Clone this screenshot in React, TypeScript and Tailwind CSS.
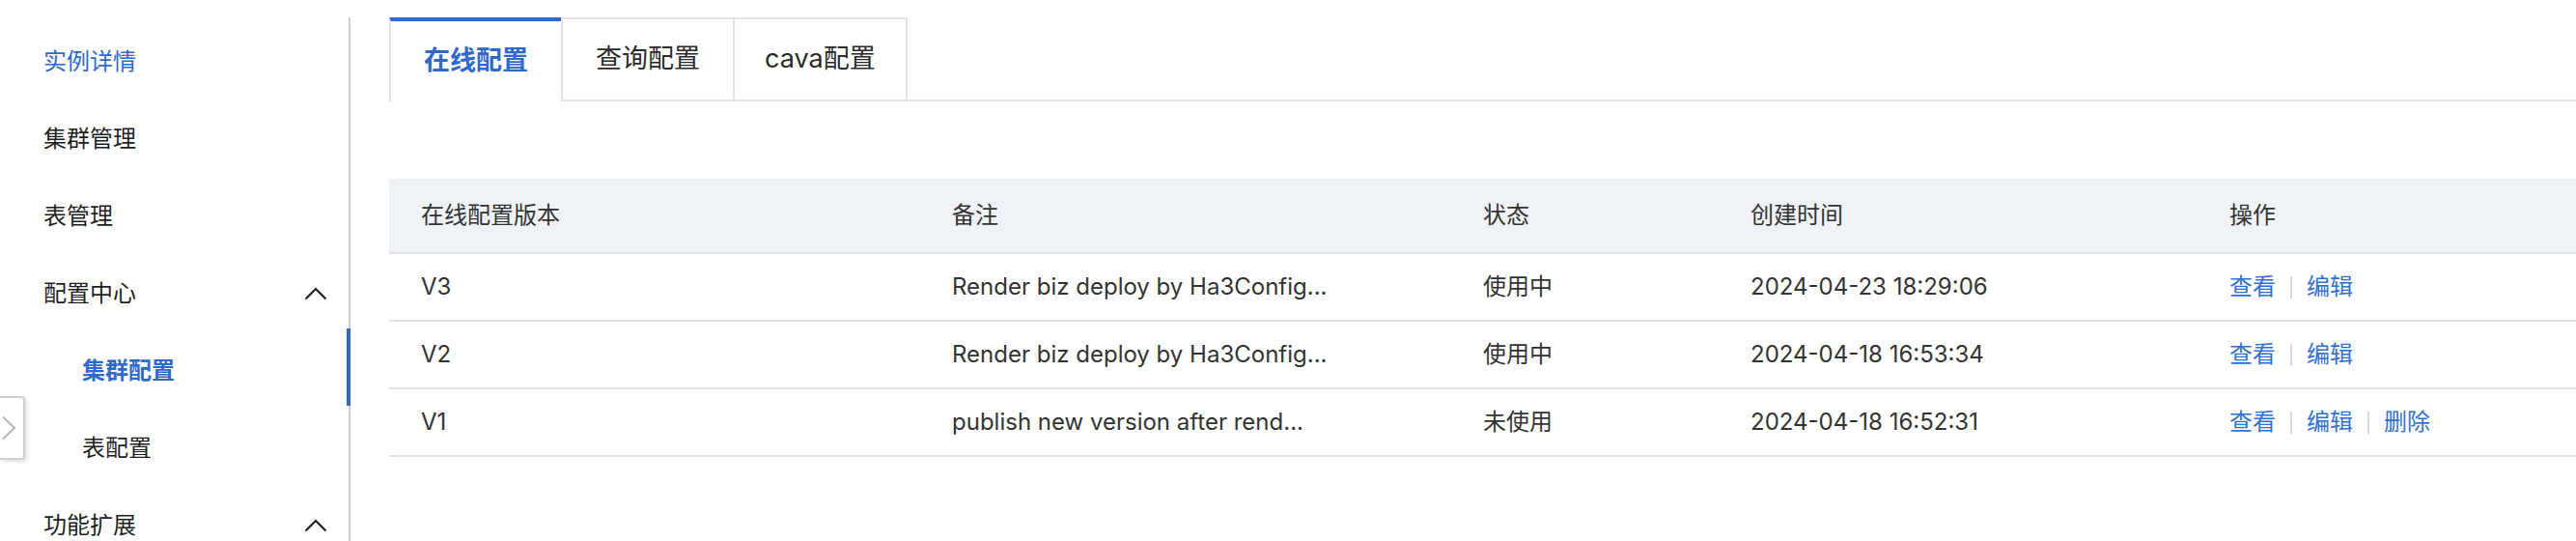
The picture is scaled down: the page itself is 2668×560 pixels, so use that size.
const FONT = "font-['Inter','Noto_Sans_CJK_SC',sans-serif]";

interface ConfigRow {
    version: string;
    note: string;
    status: string;
    createdAt: string;
    canDelete: boolean;
}

const rows: ConfigRow[] = [
    { version: 'V3', note: 'Render biz deploy by Ha3Config...', status: '使用中', createdAt: '2024-04-23 18:29:06', canDelete: false },
    { version: 'V2', note: 'Render biz deploy by Ha3Config...', status: '使用中', createdAt: '2024-04-18 16:53:34', canDelete: false },
    { version: 'V1', note: 'publish new version after rend...', status: '未使用', createdAt: '2024-04-18 16:52:31', canDelete: true },
];

function ChevronUp() {
    return (
        <svg width="24" height="14" viewBox="0 0 24 14" fill="none" className="text-[#1f1f1f]">
            <polyline points="1.5,12.5 12,2 22.5,12.5" stroke="currentColor" strokeWidth="2.2" />
        </svg>
    );
}

function NavItem({ label, sub, active, bold, open, selected }: { label: string; sub?: boolean; active?: boolean; bold?: boolean; open?: boolean; selected?: boolean }) {
    return (
        <div className={`relative h-[80px] flex items-center justify-between pr-[22px] ${sub ? 'pl-[85px]' : 'pl-[45px]'}`}>
            <span className={`text-[24px] ${active ? 'text-[#2f69cc]' : 'text-[#1f1f1f]'} ${bold ? 'font-bold' : ''}`}>
                {label}
            </span>
            {open && <ChevronUp />}
            {selected && <div className="absolute right-[-2px] top-[-4px] w-[4px] h-[80px] bg-[#2f69cc]" />}
        </div>
    );
}

function Sep() {
    return <span className="inline-block w-[2px] h-[23px] bg-[#dadada] mx-[15px]" />;
}

export default function App() {
    return (
        <div className={`relative flex w-[2668px] h-[560px] overflow-hidden bg-white ${FONT}`}>
            {/* Sidebar */}
            <aside className="w-[363px] shrink-0 mt-[18px] border-r-2 border-[#cdd0d5] pt-[6px]">
                <NavItem label="实例详情" active />
                <NavItem label="集群管理" />
                <NavItem label="表管理" />
                <NavItem label="配置中心" open />
                <NavItem label="集群配置" sub active bold selected />
                <NavItem label="表配置" sub />
                <NavItem label="功能扩展" open />
            </aside>

            {/* Collapse handle */}
            <div className="absolute left-0 top-[410px] w-[26px] h-[66px] bg-white border-2 border-l-0 border-[#cfcfcf] rounded-r-[4px] shadow-[2px_2px_4px_rgba(0,0,0,0.12)] flex items-center">
                <svg width="17" height="26" viewBox="0 0 17 26" fill="none" className="ml-[1px] text-[#bdbdbd]">
                    <polyline points="2,1.5 14,13 2,24.5" stroke="currentColor" strokeWidth="2.4" />
                </svg>
            </div>

            {/* Main */}
            <main className="flex-1 min-w-0 pt-[18px] pl-[40px]">
                <div className="flex h-[87px]">
                    <div className="h-full px-[34px] flex items-center border-t-4 border-t-[#2f69cc] border-l-2 border-l-[#e3e3e3] text-[27px] font-bold text-[#2f69cc]">
                        在线配置
                    </div>
                    <div className="h-full px-[34px] flex items-center border-2 border-[#e3e3e3] text-[27px] text-[#2b2b2b]">
                        查询配置
                    </div>
                    <div className="h-full px-[31px] flex items-center border-2 border-l-0 border-[#e3e3e3] text-[27px] text-[#2b2b2b]">
                        cava配置
                    </div>
                    <div className="flex-1 border-b-2 border-[#e3e3e3]" />
                </div>

                <table className="mt-[80px] w-full table-fixed border-collapse text-[24px] text-[#333]">
                    <colgroup>
                        <col className="w-[550px]" />
                        <col className="w-[550px]" />
                        <col className="w-[277px]" />
                        <col className="w-[496px]" />
                        <col />
                    </colgroup>
                    <thead>
                        <tr className="h-[77px] bg-[#eff2f6] border-b-2 border-[#e1e3e7]">
                            <th className="px-[33px] text-left font-normal">在线配置版本</th>
                            <th className="px-[33px] text-left font-normal">备注</th>
                            <th className="px-[33px] text-left font-normal">状态</th>
                            <th className="px-[33px] text-left font-normal">创建时间</th>
                            <th className="px-[33px] text-left font-normal">操作</th>
                        </tr>
                    </thead>
                    <tbody>
                        {rows.map((row) => (
                            <tr key={row.version} className="h-[70px] border-b-2 border-[#e1e3e7]">
                                <td className="px-[33px]">{row.version}</td>
                                <td className="px-[33px] whitespace-nowrap">{row.note}</td>
                                <td className="px-[33px]">{row.status}</td>
                                <td className="px-[33px]">{row.createdAt}</td>
                                <td className="px-[33px]">
                                    <div className="flex items-center text-[#3371d1]">
                                        <span>查看</span>
                                        <Sep />
                                        <span>编辑</span>
                                        {row.canDelete && (
                                            <>
                                                <Sep />
                                                <span>删除</span>
                                            </>
                                        )}
                                    </div>
                                </td>
                            </tr>
                        ))}
                    </tbody>
                </table>
            </main>
        </div>
    );
}
